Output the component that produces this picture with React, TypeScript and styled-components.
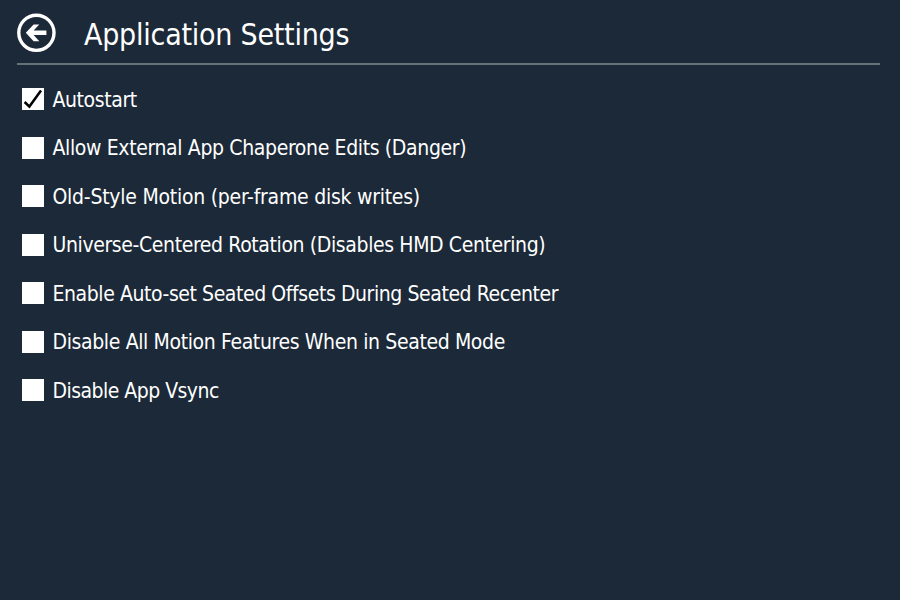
import React, { useState } from 'react';
import styled, { createGlobalStyle } from 'styled-components';

const GlobalStyle = createGlobalStyle`
  body {
    margin: 0;
    background: #1c2938;
  }
`;

const Page = styled.main`
  box-sizing: border-box;
  width: 900px;
  height: 600px;
  padding: 0 20px 0 17px;
  overflow: hidden;
  background: #1c2938;
  color: #fff;
  font-family: "DejaVu Sans Condensed", "DejaVu Sans", sans-serif;
  font-stretch: condensed;
`;

const Header = styled.header`
  box-sizing: border-box;
  display: flex;
  align-items: flex-start;
  gap: 28px;
  height: 65px;
  padding-top: 13px;
  border-bottom: 2px solid #66727a;
`;

const BackButton = styled.button`
  display: block;
  width: 39px;
  height: 40px;
  padding: 0;
  border: 0;
  background: none;
  color: inherit;

  svg {
    display: block;
  }
`;

const Title = styled.h1`
  margin: 0;
  font-size: 30px;
  font-weight: 400;
  line-height: 44px;
  letter-spacing: -0.24px;
  white-space: nowrap;
`;

const Options = styled.div`
  display: flex;
  flex-direction: column;
  padding: 10px 0 0 5px;
`;

const Option = styled.label`
  display: flex;
  align-items: center;
  gap: 8.5px;
  height: 48.5px;
`;

const Box = styled.span`
  flex: none;
  width: 22px;
  height: 22px;
  background: #fff;

  svg {
    display: block;
  }
`;

const HiddenInput = styled.input`
  display: none;
`;

const Label = styled.span<{ $tracking: number }>`
  padding-top: 1px;
  font-size: 21px;
  line-height: 28px;
  letter-spacing: ${({ $tracking }) => $tracking}px;
  white-space: nowrap;
`;

const options = [
  { text: 'Autostart', tracking: -0.4, on: true },
  { text: 'Allow External App Chaperone Edits (Danger)', tracking: -0.36, on: false },
  { text: 'Old-Style Motion (per-frame disk writes)', tracking: -0.25, on: false },
  { text: 'Universe-Centered Rotation (Disables HMD Centering)', tracking: -0.38, on: false },
  { text: 'Enable Auto-set Seated Offsets During Seated Recenter', tracking: -0.42, on: false },
  { text: 'Disable All Motion Features When in Seated Mode', tracking: -0.37, on: false },
  { text: 'Disable App Vsync', tracking: -0.53, on: false },
];

export default function App() {
  const [checked, setChecked] = useState(options.map((o) => o.on));
  const toggle = (index: number) =>
    setChecked((prev) => prev.map((value, i) => (i === index ? !value : value)));

  return (
    <Page>
      <GlobalStyle />
      <Header>
        <BackButton aria-label="Back">
          <svg width="39" height="40" viewBox="0 0 39 40" fill="none">
            <circle cx="19.4" cy="19.8" r="17.6" stroke="#fff" strokeWidth="3.4" />
            <path d="M8.8 19.8 L16.6 11.4 H22.3 L16.6 17.5 H29.4 V22.1 H16.6 L22.3 28.2 H16.6 Z" fill="#fff" />
          </svg>
        </BackButton>
        <Title>Application Settings</Title>
      </Header>
      <Options>
        {options.map((option, i) => (
          <Option key={option.text}>
            <HiddenInput type="checkbox" checked={checked[i]} onChange={() => toggle(i)} />
            <Box>
              {checked[i] && (
                <svg width="22" height="22" viewBox="0 0 22 22" fill="none">
                  <path d="M2.6 14 L7.4 18.6 L19 2.6" stroke="#000" strokeWidth="2.5" />
                </svg>
              )}
            </Box>
            <Label $tracking={option.tracking}>{option.text}</Label>
          </Option>
        ))}
      </Options>
    </Page>
  );
}
